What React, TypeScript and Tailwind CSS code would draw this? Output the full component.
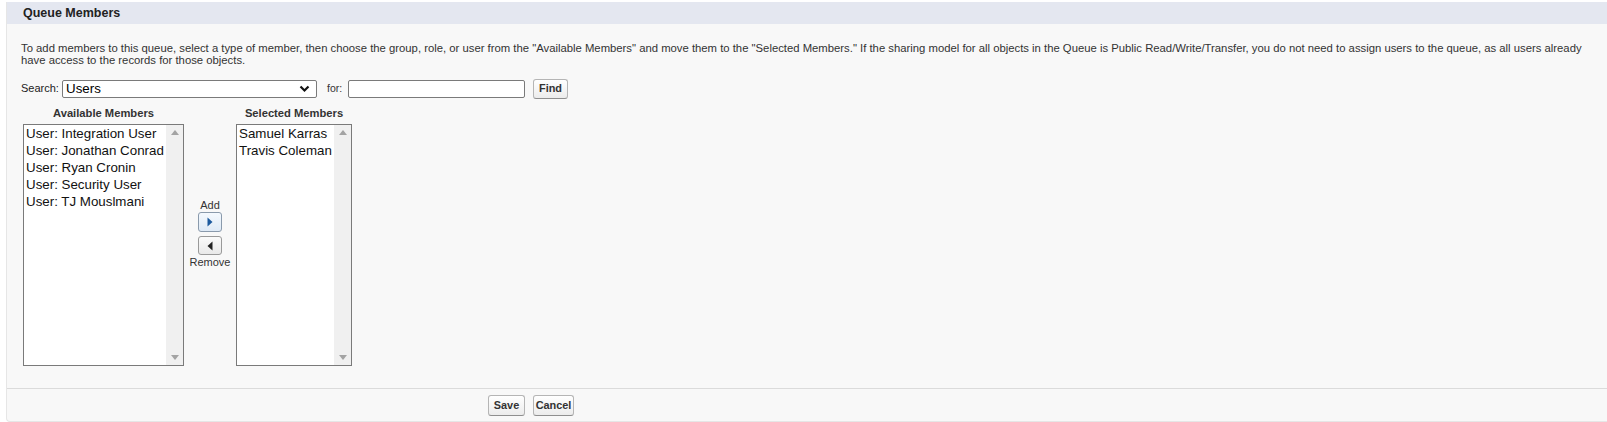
import React from "react";

function ScrollStrip() {
  return (
    <div className="flex w-[17px] shrink-0 flex-col items-center justify-between bg-[#f0f0f0] py-[5px]">
      <svg width="8" height="5" viewBox="0 0 8 5">
        <polygon points="0,5 4,0 8,5" fill="#a3a3a3" />
      </svg>
      <svg width="8" height="5" viewBox="0 0 8 5">
        <polygon points="0,0 8,0 4,5" fill="#a3a3a3" />
      </svg>
    </div>
  );
}

function ListBox({ items, width }: { items: string[]; width: string }) {
  return (
    <div className={`flex h-[242px] border border-[#7a7a7a] bg-white ${width}`}>
      <div className="flex-1 overflow-hidden pl-[2px] text-[13.33px] leading-[17px] text-[#111]">
        {items.map((it) => (
          <div key={it} className="whitespace-nowrap">
            {it}
          </div>
        ))}
      </div>
      <ScrollStrip />
    </div>
  );
}

function GrayButton({ label, w, h }: { label: string; w: string; h: string }) {
  return (
    <button
      className={`flex items-center justify-center rounded-[3px] border border-[#b5b5b5] border-b-[#8f8f8f] bg-gradient-to-b from-[#ffffff] to-[#ececec] text-[10.9px] font-bold text-[#333] ${w} ${h}`}
    >
      {label}
    </button>
  );
}

export default function App() {
  return (
    <div className="min-h-[422px] bg-white pl-[6px] pt-[2px] font-['Liberation_Sans',Arial,sans-serif]">
      <div className="rounded-bl-[4px] border-b border-l border-[#e6e6e6] bg-[#f8f8f8]">
        <div className="flex h-[22px] items-center bg-[#e4e7f0] pl-[16px] text-[12.5px] font-bold text-[#222]">
          Queue Members
        </div>
        <div className="pl-[14px] pt-[18px]">
          <p className="text-[11.3px] leading-[12px] text-[#333]">
            To add members to this queue, select a type of member, then choose the group, role, or user from the "Available Members" and move them to the "Selected Members." If the sharing model for all objects in the Queue is Public Read/Write/Transfer, you do not need to assign users to the queue, as all users already
            <br />
            have access to the records for those objects.
          </p>
          <div className="mt-[13px] flex h-[19px] items-center">
            <span className="w-[41px] text-[11px] text-[#222]">Search:</span>
            <div className="flex h-[18px] w-[255px] items-center justify-between rounded-[2px] border border-[#7a7a7a] bg-white pl-[3px] pr-[6px]">
              <span className="text-[13.33px] text-black">Users</span>
              <svg width="11" height="8" viewBox="0 0 11 8">
                <polyline points="1.5,1.5 5.5,5.5 9.5,1.5" fill="none" stroke="#111" strokeWidth="2.2" />
              </svg>
            </div>
            <span className="ml-[10px] w-[21px] text-[10.5px] text-[#333]">for:</span>
            <div className="h-[18px] w-[177px] rounded-[2px] border border-[#7a7a7a] bg-white" />
            <div className="ml-[8px]">
              <GrayButton label="Find" w="w-[35px]" h="h-[20px]" />
            </div>
          </div>
          <div className="ml-[2px] mt-[9px] grid grid-cols-[161px_52px_116px] text-[11.2px] font-bold leading-[13px] text-[#333]">
            <div className="text-center">Available Members</div>
            <div />
            <div className="text-center">Selected Members</div>
          </div>
          <div className="ml-[2px] mt-[4px] grid grid-cols-[161px_52px_116px]">
            <ListBox
              width="w-[161px]"
              items={[
                "User: Integration User",
                "User: Jonathan Conrad",
                "User: Ryan Cronin",
                "User: Security User",
                "User: TJ Mouslmani",
              ]}
            />
            <div className="flex flex-col items-center pt-[75px] text-[11px] leading-[13px] text-[#333]">
              <div>Add</div>
              <button className="flex h-[20px] w-[24px] items-center justify-center rounded-[3px] border border-[#8a9aac] bg-gradient-to-b from-[#f4f9fe] to-[#dfeaf6]">
                <svg width="6" height="10" viewBox="0 0 6 10">
                  <polygon points="0.5,0.5 5.5,5 0.5,9.5" fill="#1d5a9e" />
                </svg>
              </button>
              <button className="mt-[4px] flex h-[19px] w-[24px] items-center justify-center rounded-[3px] border border-[#9a9a9a] bg-gradient-to-b from-[#fbfbfb] to-[#e9e9e9]">
                <svg width="6" height="10" viewBox="0 0 6 10">
                  <polygon points="5.5,0.5 0.5,5 5.5,9.5" fill="#222" />
                </svg>
              </button>
              <div className="mt-[1px]">Remove</div>
            </div>
            <ListBox width="w-[116px]" items={["Samuel Karras", "Travis Coleman"]} />
          </div>
        </div>
        <div className="mt-[22px] flex h-[33px] items-center gap-[8px] border-t border-[#dbdbdb] pl-[481px]">
          <GrayButton label="Save" w="w-[37px]" h="h-[21px]" />
          <GrayButton label="Cancel" w="w-[41px]" h="h-[21px]" />
        </div>
      </div>
    </div>
  );
}
